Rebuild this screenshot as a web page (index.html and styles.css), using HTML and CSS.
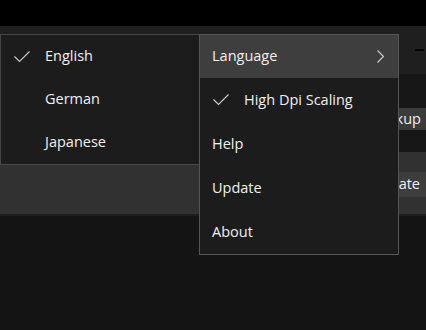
FILE: index.html
```html
<!DOCTYPE html>
<html>
<head>
	<title>Settings Menu</title>
	<link rel="stylesheet" href="styles.css">
</head>
<body>
	<div class="screen">
		<div class="topbar"></div>
		<div class="window">
			<div class="titlebar">
				<span class="minimize"></span>
			</div>
			<div class="content">
				<div class="row row-top"></div>
				<div class="row row-button">
					<div class="btn">Backup</div>
				</div>
				<div class="row row-gap"></div>
				<div class="toolbar">
					<div class="btn btn-bar">Duplicate</div>
				</div>
				<div class="toolbar-line"></div>
			</div>
		</div>

		<div class="menu menu-sub">
			<div class="menu-item checkable">
				<svg class="check" width="16" height="12" viewBox="0 0 16 12"><path d="M0.5 5.5 L5.5 10.5 L15.5 0.5" fill="none" stroke="#c8c8c8" stroke-width="1.2"/></svg>
				<span>English</span>
			</div>
			<div class="menu-item checkable"><span>German</span></div>
			<div class="menu-item checkable"><span>Japanese</span></div>
		</div>

		<div class="menu menu-main">
			<div class="menu-item active">
				<span>Language</span>
				<svg class="chevron" width="7" height="13" viewBox="0 0 7 13"><path d="M0.5 0.5 L6.5 6.5 L0.5 12.5" fill="none" stroke="#d0d0d0" stroke-width="1.1"/></svg>
			</div>
			<div class="menu-item checkable">
				<svg class="check" width="16" height="12" viewBox="0 0 16 12"><path d="M0.5 5.5 L5.5 10.5 L15.5 0.5" fill="none" stroke="#c8c8c8" stroke-width="1.2"/></svg>
				<span>High Dpi Scaling</span>
			</div>
			<div class="menu-item"><span>Help</span></div>
			<div class="menu-item"><span>Update</span></div>
			<div class="menu-item"><span>About</span></div>
		</div>
	</div>
</body>
</html>
```

FILE: styles.css
```css
html, body {
	margin: 0;
	padding: 0;
}
body {
	background-color: #141414;
	font-family: "Open Sans", "Noto Sans", sans-serif;
	font-size: 14.5px;
	color: #f0f0f0;
}
.screen {
	position: relative;
	width: 426px;
	height: 330px;
	overflow: hidden;
}
.topbar {
	height: 26px;
	background-color: #000;
}
.titlebar {
	height: 48px;
	background-color: #1f1f1f;
	display: flex;
	justify-content: flex-end;
	align-items: center;
}
.minimize {
	width: 9px;
	height: 2px;
	margin-right: 2px;
	background-color: #050505;
}
.row-top {
	height: 34px;
	background-color: #171717;
}
.row-button {
	height: 22px;
	background-color: #171717;
	display: flex;
	justify-content: flex-end;
}
.row-gap {
	height: 22px;
	background-color: #171717;
}
.btn {
	display: flex;
	align-items: center;
	padding: 0 5px 1px 10px;
	background-color: #3b3b3b;
	color: #f0f0f0;
}
.toolbar {
	height: 62px;
	background-color: #313131;
	display: flex;
	justify-content: flex-end;
	align-items: center;
}
.btn-bar {
	height: 25px;
	margin-top: 2px;
	padding-right: 6px;
	box-sizing: border-box;
	background-color: #3d3d3d;
}
.toolbar-line {
	height: 2px;
	background-color: #1e1e1e;
}

/* menus lie over the window */
.menu {
	position: absolute;
	top: 34px;
	box-sizing: border-box;
	width: 200px;
	background-color: #1c1c1c;
	border: 1px solid #474747;
}
.menu-sub {
	left: 0;
}
.menu-main {
	left: 199px;
	border-color: #555;
}
.menu-item {
	position: relative;
	height: 44px;
	box-sizing: border-box;
	display: flex;
	align-items: center;
	padding: 0 14px 2px 12px;
}
.menu-sub .menu-item {
	height: 43px;
}
.menu-item.checkable {
	padding-left: 44px;
}
.menu-item.active {
	background-color: #3e3e3e;
	justify-content: space-between;
	height: 43px;
}
.check {
	position: absolute;
	left: 13px;
	top: 16px;
}
.chevron {
	display: block;
	margin-top: 1px;
}
```
